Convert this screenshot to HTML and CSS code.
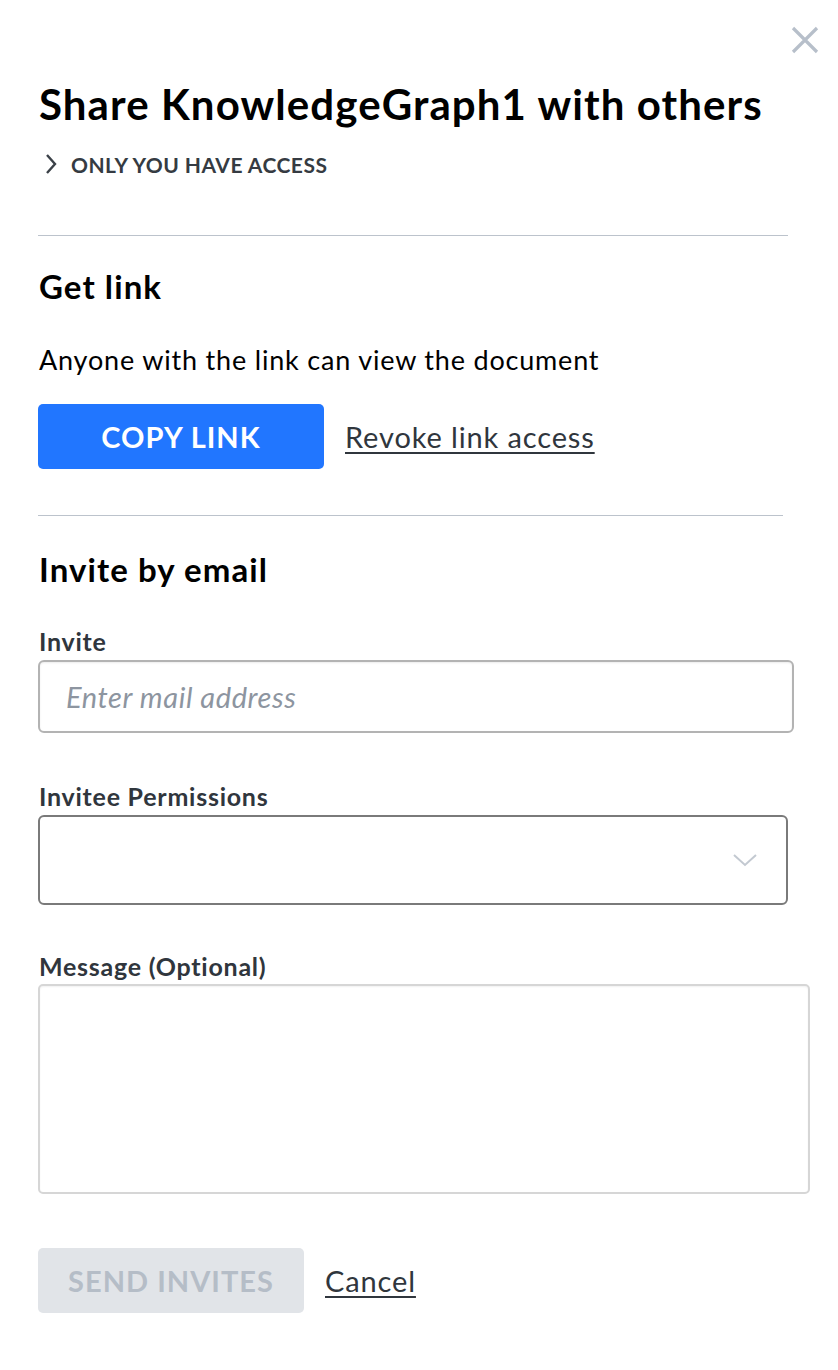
FILE: index.html
```html
<!DOCTYPE html>
<html lang="en">

<head>
    <title>Share</title>
    <link rel="stylesheet" href="styles.css">
</head>

<body>
    <div class="dialog">
        <button type="button" class="close" aria-label="Close">
            <svg width="30" height="30" viewBox="0 0 30 30">
                <path d="M3 3 L27 27 M27 3 L3 27" stroke="#b7bfca" stroke-width="3.2" fill="none" />
            </svg>
        </button>
        <h1 class="title">Share KnowledgeGraph1 with others</h1>
        <div class="access">
            <svg class="chev" width="16" height="22" viewBox="0 0 16 22">
                <path d="M4 2 L12 11 L4 20" stroke="#3b4148" stroke-width="2.4" fill="none" />
            </svg>
            <span>ONLY YOU HAVE ACCESS</span>
        </div>

        <hr class="divider first">

        <h2 class="section">Get link</h2>
        <p class="info">Anyone with the link can view the document</p>
        <div class="actions">
            <button type="button" class="btn primary">COPY LINK</button>
            <a href="#" class="link">Revoke link access</a>
        </div>

        <hr class="divider second">

        <h2 class="section">Invite by email</h2>
        <label class="label" for="mail">Invite</label>
        <input type="text" id="mail" class="field" placeholder="Enter mail address">

        <label class="label" for="perm">Invitee Permissions</label>
        <div class="select" id="perm">
            <svg width="26" height="16" viewBox="0 0 26 16">
                <path d="M2 3 L13 13 L24 3" stroke="#c3c9d1" stroke-width="2" fill="none" />
            </svg>
        </div>

        <label class="label msg-label" for="msg">Message (Optional)</label>
        <textarea id="msg" class="message"></textarea>

        <div class="actions bottom">
            <button type="button" class="btn disabled">SEND INVITES</button>
            <a href="#" class="link">Cancel</a>
        </div>
    </div>
</body>

</html>
```

FILE: styles.css
```css
body {
    margin: 0;
    background-color: #ffffff;
    font-family: Lato, "Open Sans", sans-serif;
    color: #000000;
}

.dialog {
    position: relative;
    padding: 80px 0 40px 38px;
}

.close {
    position: absolute;
    top: 25px;
    right: 18px;
    padding: 0;
    border: none;
    background: none;
    line-height: 0;
}

.title {
    margin: 0 0 0 1px;
    font-size: 42px;
    line-height: 48px;
    font-weight: 700;
    letter-spacing: 0.026em;
}

.access {
    display: flex;
    align-items: center;
    gap: 12px;
    margin: 24px 0 0 5px;
    height: 24px;
    font-size: 21px;
    font-weight: 700;
    letter-spacing: 0.023em;
    color: #353b42;
}

.divider {
    border: none;
    border-top: 1.5px solid #bcc3cc;
    margin: 0;
}

.divider.first {
    width: 750px;
    margin-top: 59px;
}

.divider.second {
    width: 745px;
    margin-top: 46px;
}

.section {
    margin: 31px 0 0 1px;
    font-size: 33px;
    line-height: 38px;
    font-weight: 700;
    letter-spacing: 0.033em;
}

.divider.second + .section {
    margin-top: 34px;
}

.info {
    margin: 39px 0 0 1px;
    font-size: 27px;
    line-height: 32px;
    letter-spacing: 0.03em;
}

.actions {
    display: flex;
    align-items: center;
    gap: 21px;
    margin-top: 28px;
}

.btn {
    height: 65px;
    width: 286px;
    border: none;
    border-radius: 5px;
    font-family: Lato, sans-serif;
    font-size: 29px;
    font-weight: 700;
    letter-spacing: 0.035em;
    padding: 0;
}

.btn.primary {
    background-color: #2176ff;
    color: #ffffff;
}

.btn.disabled {
    width: 266px;
    background-color: #e1e4e8;
    color: #b5bdc7;
}

.link {
    font-size: 29px;
    letter-spacing: 0.03em;
    color: #30363d;
    text-decoration: underline;
    text-underline-offset: 4px;
    text-decoration-thickness: 2px;
}

.label {
    display: block;
    margin: 49px 0 5px 1px;
    font-size: 25px;
    line-height: 28px;
    font-weight: 700;
    letter-spacing: 0.03em;
    color: #30363d;
}

.section + .label {
    margin-top: 39px;
}

.label.msg-label {
    margin-top: 47px;
    margin-bottom: 4px;
}

.field {
    display: block;
    box-sizing: border-box;
    width: 756px;
    height: 73px;
    border: 2px solid #b3b3b3;
    border-radius: 6px;
    padding: 0 26px;
    font-family: Lato, sans-serif;
    font-size: 29px;
    box-shadow: inset 0 1px 2px rgba(0, 0, 0, 0.08);
}

.field::placeholder {
    color: #8d95a0;
    font-style: italic;
    letter-spacing: 0.02em;
}

.select {
    display: flex;
    align-items: center;
    justify-content: flex-end;
    box-sizing: border-box;
    width: 750px;
    height: 90px;
    border: 2px solid #7a7a7a;
    border-radius: 6px;
    padding-right: 28px;
}

.message {
    display: block;
    box-sizing: border-box;
    width: 772px;
    height: 210px;
    border: 2px solid #d6d6d6;
    border-radius: 5px;
    resize: none;
    box-shadow: inset 0 1px 2px rgba(0, 0, 0, 0.06);
}

.actions.bottom {
    margin-top: 54px;
}
```
